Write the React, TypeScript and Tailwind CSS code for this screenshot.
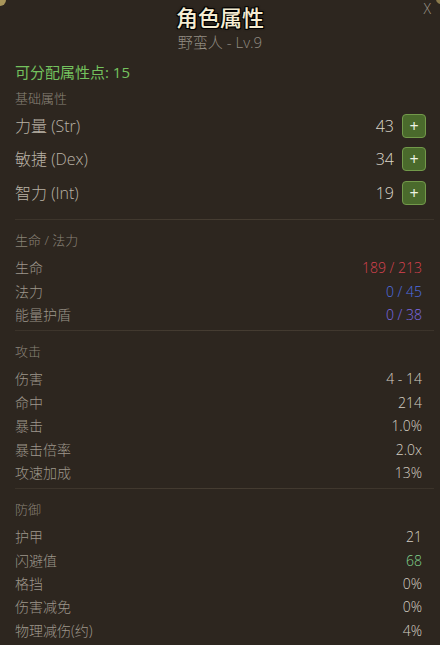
import React from 'react'

const FONT = '"Open Sans", "Noto Sans CJK SC", sans-serif'

type Stat = { label: string; value: string; color?: string }

const attrs = [
  { label: '力量 (Str)', value: '43' },
  { label: '敏捷 (Dex)', value: '34' },
  { label: '智力 (Int)', value: '19' },
]

const sections: { title: string; rows: Stat[] }[] = [
  {
    title: '生命 / 法力',
    rows: [
      { label: '生命', value: '189 / 213', color: 'text-[#d8424f]' },
      { label: '法力', value: '0 / 45', color: 'text-[#4f6fe3]' },
      { label: '能量护盾', value: '0 / 38', color: 'text-[#7d6be6]' },
    ],
  },
  {
    title: '攻击',
    rows: [
      { label: '伤害', value: '4 - 14' },
      { label: '命中', value: '214' },
      { label: '暴击', value: '1.0%' },
      { label: '暴击倍率', value: '2.0x' },
      { label: '攻速加成', value: '13%' },
    ],
  },
  {
    title: '防御',
    rows: [
      { label: '护甲', value: '21' },
      { label: '闪避值', value: '68', color: 'text-[#80cf8c]' },
      { label: '格挡', value: '0%' },
      { label: '伤害减免', value: '0%' },
      { label: '物理减伤(约)', value: '4%' },
    ],
  },
]

function Divider() {
  return <div className="ml-[15px] mr-[6px] h-px bg-gradient-to-r from-[#3b332a] via-[#463d32] to-[#3b332a]" />
}

export default function App() {
  return (
    <div
      className="relative w-[440px] h-[645px] overflow-hidden bg-[#2d261f] font-light"
      style={{ fontFamily: FONT }}
    >
      {/* corner studs */}
      <div className="absolute -left-[6px] -top-[6px] w-[12px] h-[12px] rounded-full bg-[#a8955a]" />
      <div className="absolute -right-[6px] -top-[6px] w-[10px] h-[10px] rounded-full bg-[#8a7a4c]" />
      <div className="absolute right-[9px] top-[2px] text-[14px] leading-[14px] text-[#9e978a]">X</div>

      <div className="pt-[4px] text-center">
        <div className="text-[22px] leading-[26px] font-medium text-[#f4ecd2] [text-shadow:1px_1px_0_#000,-1px_-1px_0_#000,1px_-1px_0_#000,-1px_1px_0_#000,0_0_3px_#000]">
          角色属性
        </div>
        <div className="mt-[2px] text-[15px] leading-[20px] text-[#928c82]">野蛮人 - Lv.9</div>
      </div>

      <div className="mt-[10px] px-[15px] text-[15px] leading-[20px] font-normal text-[#74c25e]">可分配属性点: 15</div>
      <div className="mt-[7px] px-[15px] text-[13px] leading-[18px] text-[#8a8378]">基础属性</div>

      <div className="mt-[2px] pl-[15px] pr-[14px]">
        {attrs.map((a) => (
          <div key={a.label} className="flex h-[33.5px] items-center">
            <span className="flex-1 text-[16px] text-[#b9b2a6]">{a.label}</span>
            <span className="text-[16px] text-[#dcd6ca]">{a.value}</span>
            <button className="ml-[8px] flex h-[24px] w-[24px] items-center justify-center rounded-[4px] border border-[#72994a] bg-[#4a6a2c] text-[16px] leading-none font-normal text-[#eef3e4]">
              +
            </button>
          </div>
        ))}
      </div>

      {sections.map((s, i) => (
        <div key={s.title}>
          <div className={i === 0 ? 'mt-[9.5px]' : 'mt-[4px]'}>
            <Divider />
          </div>
          <div className="mt-[11px] px-[15px] text-[13px] leading-[18px] text-[#8a8378]">{s.title}</div>
          <div className="mt-[7px] pl-[15px] pr-[18px]">
            {s.rows.map((r) => (
              <div key={r.label} className="flex h-[23.4px] items-center text-[14px]">
                <span className="flex-1 text-[#9d968b]">{r.label}</span>
                <span className={r.color ?? 'text-[#d6d0c4]'}>{r.value}</span>
              </div>
            ))}
          </div>
        </div>
      ))}
    </div>
  )
}
